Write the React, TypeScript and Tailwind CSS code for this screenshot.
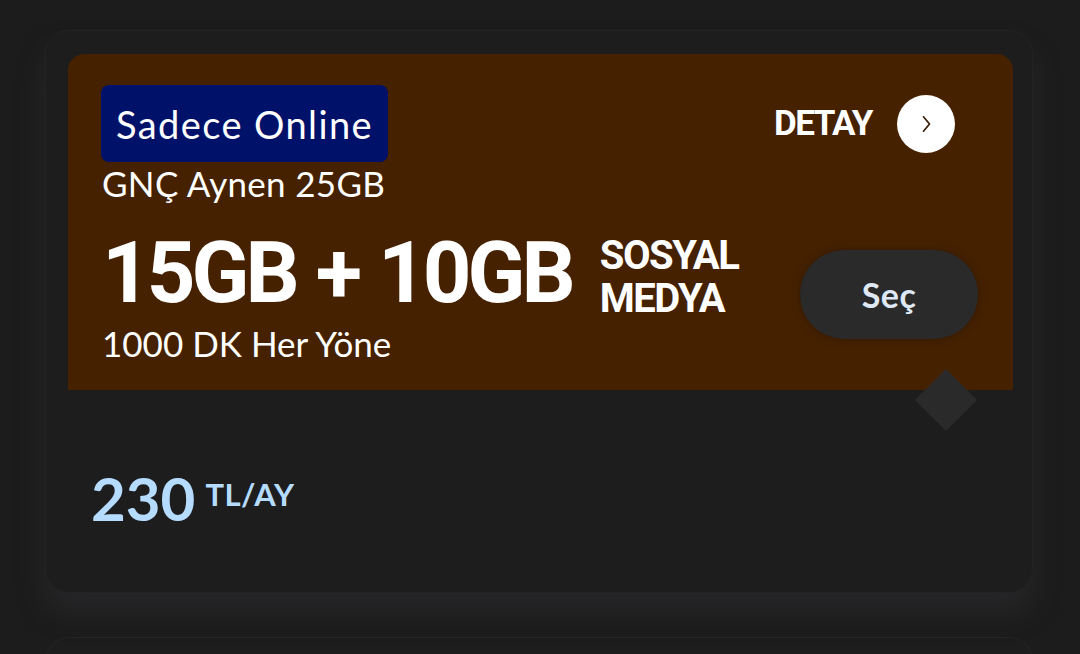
import React from "react";

const Chevron = () => (
  <svg width="16" height="18" viewBox="0 0 16 18" fill="none">
    <path d="M5.5 1.8 L11.5 9 L5.5 16.2" stroke="#3a1c05" strokeWidth="1.7" strokeLinecap="round" strokeLinejoin="round" />
  </svg>
);

export default function App() {
  return (
    <div className="w-[1080px] h-[654px] overflow-hidden bg-[#1c1c1c] pt-[30px] pl-[45px] pr-[47px]" style={{ fontFamily: "Lato, 'Noto Sans', sans-serif" }}>
      <div className="relative rounded-[24px] bg-[#1d1d1d] border border-[#222324] shadow-[0_20px_28px_rgba(50,52,56,0.45)] pt-[23px] pl-[22px] pr-[19px] h-[563px]">
        <div className="bg-[#452100] rounded-t-[16px] h-[336px] pl-[33px] pt-[31px] pr-[35px] text-white">
          <div className="flex items-center justify-between">
            <div className="bg-[#00116a] rounded-[8px] h-[77px] w-[287px] flex items-center pl-[15px]">
              <span className="text-[38px] tracking-[1.4px] font-normal leading-none">Sadece Online</span>
            </div>
            <div className="flex items-center mr-[23px]">
              <span className="text-[35px] font-bold tracking-[-1.5px] leading-none" style={{ fontFamily: "Roboto, sans-serif" }}>DETAY</span>
              <div className="ml-[25px] w-[58px] h-[58px] rounded-full bg-white flex items-center justify-center">
                <Chevron />
              </div>
            </div>
          </div>
          <div className="text-[35px] leading-none mt-[4px] ml-[1px] tracking-[0.3px]">GNÇ Aynen 25GB</div>
          <div className="flex items-start mt-[30px]">
            <div className="flex items-start gap-[20px] text-[85px] font-bold leading-[85px] tracking-[-4px] ml-[1px]" style={{ fontFamily: "Roboto, sans-serif" }}>
              <span>15GB</span>
              <span>+</span>
              <span>10GB</span>
            </div>
            <div className="ml-[28px] mt-[3px] text-[40px] font-bold leading-[43px] tracking-[-1.5px]" style={{ fontFamily: "Roboto, sans-serif" }}>
              <div>SOSYAL</div>
              <div>MEDYA</div>
            </div>
            <div className="ml-auto mt-[19px] -mb-[23px] w-[178px] h-[89px] rounded-full bg-[#2a2a2a] shadow-[0_0_10px_rgba(0,0,0,0.25)] flex items-center justify-center">
              <span className="text-[34px] font-bold text-[#dfe8f5] tracking-[0.5px]">Seç</span>
            </div>
          </div>
          <div className="text-[35px] leading-none mt-[6px] ml-[1px]">1000 DK Her Yöne</div>
        </div>
        <div className="absolute left-[878px] top-[347px] w-[44px] h-[44px] rotate-45 bg-[#2a2a2a]" />
        <div className="flex items-start pl-[23px] mt-[78px]">
          <span className="text-[60px] font-bold leading-none text-[#b5dcff]">230</span>
          <span className="ml-[10px] mt-[11px] text-[31px] font-bold leading-none tracking-[0.5px] text-[#b5dcff]">TL/AY</span>
        </div>
      </div>
      <div className="mt-[44px] rounded-[24px] bg-[#1d1d1d] border border-[#242526] h-[100px]" />
    </div>
  );
}
